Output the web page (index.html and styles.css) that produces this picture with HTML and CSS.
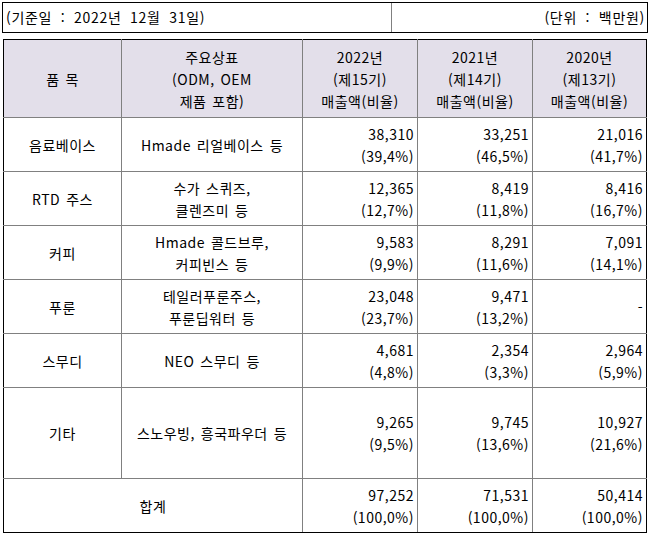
FILE: index.html
```html
<!DOCTYPE html>
<html lang="ko">
<head>
<meta charset="utf-8">
<link rel="stylesheet" href="styles.css">
</head>
<body>
<div class="info">
  <div class="info-left">(기준일 : 2022년 12월 31일)</div>
  <div class="info-right">(단위 : 백만원)</div>
</div>
<table class="sales">
  <colgroup>
    <col class="c1"><col class="c2"><col class="c3"><col class="c4"><col class="c5">
  </colgroup>
  <thead>
    <tr class="head">
      <th>품 목</th>
      <th>주요상표<br>(ODM, OEM<br>제품 포함)</th>
      <th>2022년<br>(제15기)<br>매출액(비율)</th>
      <th>2021년<br>(제14기)<br>매출액(비율)</th>
      <th>2020년<br>(제13기)<br>매출액(비율)</th>
    </tr>
  </thead>
  <tbody>
    <tr>
      <td class="ctr">음료베이스</td>
      <td class="ctr">Hmade 리얼베이스 등</td>
      <td class="num">38,310<br>(39,4%)</td>
      <td class="num">33,251<br>(46,5%)</td>
      <td class="num">21,016<br>(41,7%)</td>
    </tr>
    <tr>
      <td class="ctr">RTD 주스</td>
      <td class="ctr">수가 스퀴즈,<br>클렌즈미 등</td>
      <td class="num">12,365<br>(12,7%)</td>
      <td class="num">8,419<br>(11,8%)</td>
      <td class="num">8,416<br>(16,7%)</td>
    </tr>
    <tr>
      <td class="ctr">커피</td>
      <td class="ctr">Hmade 콜드브루,<br>커피빈스 등</td>
      <td class="num">9,583<br>(9,9%)</td>
      <td class="num">8,291<br>(11,6%)</td>
      <td class="num">7,091<br>(14,1%)</td>
    </tr>
    <tr>
      <td class="ctr">푸룬</td>
      <td class="ctr">테일러푸룬주스,<br>푸룬딥워터 등</td>
      <td class="num">23,048<br>(23,7%)</td>
      <td class="num">9,471<br>(13,2%)</td>
      <td class="num">-</td>
    </tr>
    <tr>
      <td class="ctr">스무디</td>
      <td class="ctr">NEO 스무디 등</td>
      <td class="num">4,681<br>(4,8%)</td>
      <td class="num">2,354<br>(3,3%)</td>
      <td class="num">2,964<br>(5,9%)</td>
    </tr>
    <tr class="tall">
      <td class="ctr">기타</td>
      <td class="ctr">스노우빙, 흥국파우더 등</td>
      <td class="num">9,265<br>(9,5%)</td>
      <td class="num">9,745<br>(13,6%)</td>
      <td class="num">10,927<br>(21,6%)</td>
    </tr>
    <tr>
      <td class="ctr" colspan="2">합계</td>
      <td class="num">97,252<br>(100,0%)</td>
      <td class="num">71,531<br>(100,0%)</td>
      <td class="num">50,414<br>(100,0%)</td>
    </tr>
  </tbody>
</table>
</body>
</html>
```

FILE: styles.css
```css
html, body {
  margin: 0;
  padding: 0;
  background: #ffffff;
}
body {
  font-family: "Noto Sans CJK KR", "Noto Sans", sans-serif;
  font-size: 14px;
  color: #000;
  padding: 2px 0 0 2px;
}
.info {
  display: flex;
  width: 644px;
  height: 29px;
  border: 1px solid #000;
  line-height: 29px;
  letter-spacing: 0.7px;
  word-spacing: 4px;
}
.info-left {
  width: 385px;
  padding-left: 3px;
  border-right: 1px solid #808080;
}
.info-right {
  flex: 1;
  text-align: right;
  padding-right: 2px;
}
.sales {
  margin-top: 6px;
  margin-left: 1px;
  border-collapse: collapse;
  table-layout: fixed;
  width: 644px;
  border: 1px solid #000;
  letter-spacing: 0.5px;
  word-spacing: 1.5px;
}
.c1 { width: 118px; }
.c2 { width: 181px; }
.c3 { width: 115px; }
.c4 { width: 115px; }
.c5 { width: 114px; }
.sales th, .sales td {
  border: 1px solid #808080;
  line-height: 22px;
  padding: 0 3px;
  font-weight: normal;
  vertical-align: middle;
  white-space: nowrap;
}
.head th {
  background: #e3dfea;
  height: 77px;
  text-align: center;
}
.sales td { height: 53px; }
.sales tr.tall td { height: 90px; }
.ctr { text-align: center; }
.num { text-align: right; }
.sales tr:first-child th { border-top: 1px solid #000; }
.sales tr:last-child td { border-bottom: 1px solid #000; }
.sales tr th:first-child, .sales tr td:first-child { border-left: 1px solid #000; }
.sales tr th:last-child, .sales tr td:last-child { border-right: 1px solid #000; }
```
